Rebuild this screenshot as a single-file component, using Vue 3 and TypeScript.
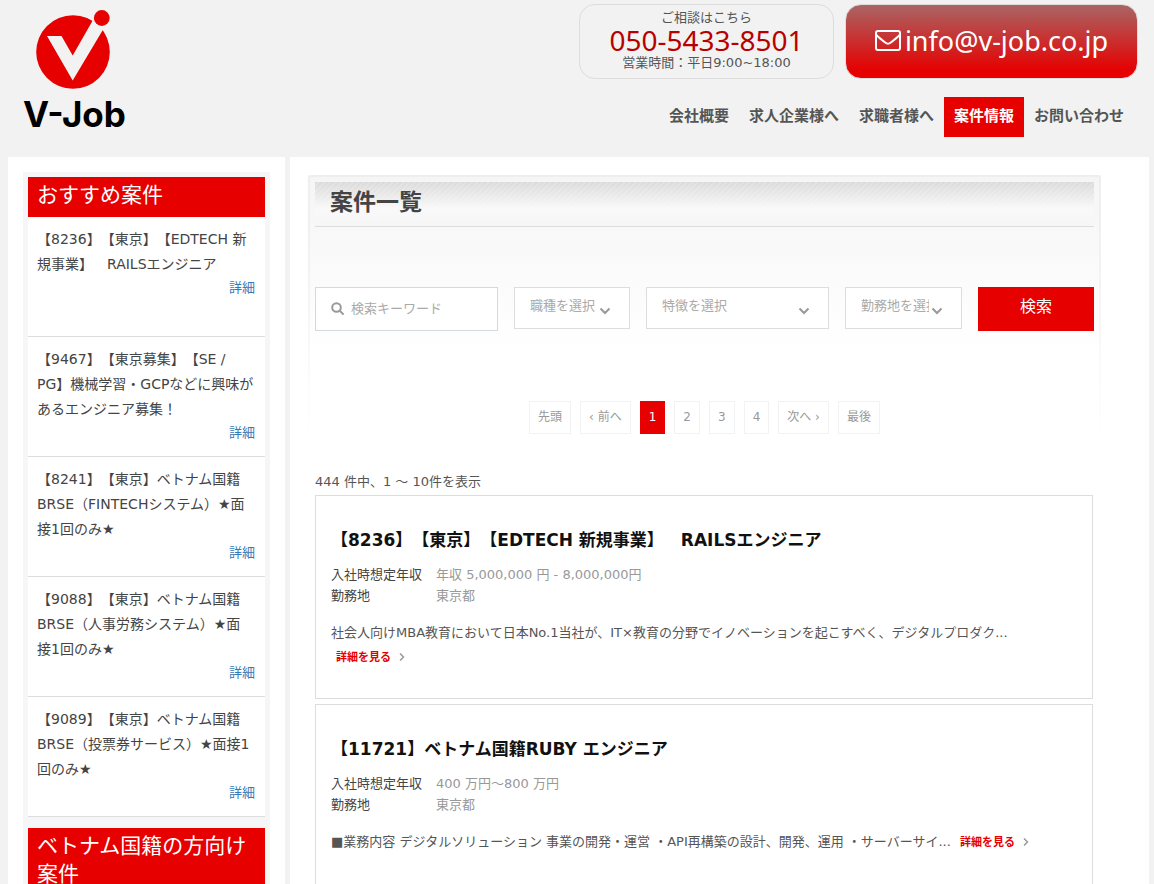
<script setup lang="ts">
import { ref } from 'vue'

interface NavItem {
  label: string
  active?: boolean
}

interface Job {
  title: string
  salary: string
  place: string
  summary: string
}

const navItems: NavItem[] = [
  { label: '会社概要' },
  { label: '求人企業様へ' },
  { label: '求職者様へ' },
  { label: '案件情報', active: true },
  { label: 'お問い合わせ' },
]

const recommended: string[] = [
  '【8236】【東京】【EDTECH 新規事業】　RAILSエンジニア',
  '【9467】【東京募集】【SE / PG】機械学習・GCPなどに興味があるエンジニア募集！',
  '【8241】【東京】ベトナム国籍BRSE（FINTECHシステム）★面接1回のみ★',
  '【9088】【東京】ベトナム国籍BRSE（人事労務システム）★面\n接1回のみ★',
  '【9089】【東京】ベトナム国籍BRSE（投票券サービス）★面接1回のみ★',
]

const filters = [
  { id: 'occupation', label: '職種を選択' },
  { id: 'feature', label: '特徴を選択' },
  { id: 'location', label: '勤務地を選択' },
]

const pages: string[] = ['先頭', '‹ 前へ', '1', '2', '3', '4', '次へ ›', '最後']
const currentPage = '1'
const keyword = ref('')

const jobs: Job[] = [
  {
    title: '【8236】【東京】【EDTECH 新規事業】　RAILSエンジニア',
    salary: '年収 5,000,000 円 - 8,000,000円',
    place: '東京都',
    summary:
      '社会人向けMBA教育において日本No.1当社が、IT×教育の分野でイノベーションを起こすべく、デジタルプロダク...',
  },
  {
    title: '【11721】ベトナム国籍RUBY エンジニア',
    salary: '400 万円～800 万円',
    place: '東京都',
    summary:
      '■業務内容 デジタルソリューション 事業の開発・運営 ・API再構築の設計、開発、運用 ・サーバーサイ...',
  },
]
</script>

<template>
  <div class="page">
    <header class="header">
      <a class="logo" href="#" aria-label="V-Job">
        <svg class="logo-mark" viewBox="0 0 76 80" aria-hidden="true">
          <circle cx="37" cy="42" r="36.800" fill="#e60000" />
          <path d="M11 26H25.500L36.700 45.500L57 10L68 18L36.700 70.500Z" fill="#f2f2f2" />
          <path d="M56 12L62 0L76 14L65.500 20.500Z" fill="#f2f2f2" />
          <circle cx="65.800" cy="8" r="7.900" fill="#e60000" />
        </svg>
        <span class="logo-text">V-Job</span>
      </a>
      <div class="header-side">
        <div class="contacts">
          <div class="phone">
            <span>ご相談はこちら</span>
            <a class="phone-number" href="tel:050-5433-8501">050-5433-8501</a>
            <span>営業時間：平日9:00~18:00</span>
          </div>
          <a class="mail" href="mailto:info@v-job.co.jp">
            <svg class="mail-icon" viewBox="0 0 26 21" aria-hidden="true">
              <rect x="1" y="1" width="24" height="19" rx="2" />
              <path d="M1 4.500C2 6 3.500 7.200 5 8.400L10.500 12.800Q13 14.600 15.500 12.800L21 8.400C22.500 7.200 24 6 25 4.500" />
            </svg>
            <span>info@v-job.co.jp</span>
          </a>
        </div>
        <nav class="nav">
          <a
            v-for="item in navItems"
            :key="item.label"
            href="#"
            :class="{ active: item.active }"
          >{{ item.label }}</a>
        </nav>
      </div>
    </header>

    <div class="columns">
      <aside class="sidebar">
        <section class="widget">
          <h2>おすすめ案件</h2>
          <ul>
            <li v-for="item in recommended" :key="item">
              <p>{{ item }}</p>
              <a href="#">詳細</a>
            </li>
          </ul>
        </section>
        <section class="widget">
          <h2>ベトナム国籍の方向け案件</h2>
        </section>
      </aside>

      <main class="main">
        <div class="panel">
          <h1>案件一覧</h1>
          <form class="search" @submit.prevent>
            <label class="keyword">
              <svg viewBox="0 0 14 14" aria-hidden="true">
                <circle cx="5.500" cy="5.500" r="4.300" />
                <path d="M8.800 8.800L12.600 12.600" />
              </svg>
              <input v-model="keyword" type="text" placeholder="検索キーワード" aria-label="検索キーワード" />
            </label>
            <div v-for="f in filters" :key="f.id" class="select">
              <select :id="f.id" :aria-label="f.label">
                <option>{{ f.label }}</option>
              </select>
              <svg viewBox="0 0 12 8" aria-hidden="true"><path d="M1.500 1.500L6 6L10.500 1.500" /></svg>
            </div>
            <button type="submit">検索</button>
          </form>
          <nav class="pager" aria-label="ページ">
            <a v-for="p in pages" :key="p" href="#" :class="{ current: p === currentPage }">{{ p }}</a>
          </nav>
        </div>

        <div class="results">
          <p class="count">444 件中、1 ～ 10件を表示</p>
          <article v-for="job in jobs" :key="job.title" class="job">
            <h3>{{ job.title }}</h3>
            <dl>
              <dt>入社時想定年収</dt>
              <dd>{{ job.salary }}</dd>
              <dt>勤務地</dt>
              <dd>{{ job.place }}</dd>
            </dl>
            <p class="summary">
              {{ job.summary }}
              <a href="#">詳細を見る<svg viewBox="0 0 6 8" aria-hidden="true"><path d="M1 0.500L4.500 4L1 7.500" /></svg></a>
            </p>
          </article>
        </div>
      </main>
    </div>
  </div>
</template>

<style>
body {
  margin: 0;
  background: #f2f2f2;
}
</style>

<style scoped>
.page {
  font: 13px/21px "DejaVu Sans", "Noto Sans CJK JP", sans-serif;
  text-spacing-trim: space-all;
  color: #444;
}

.page * {
  box-sizing: border-box;
}

a {
  text-decoration: none;
}

h1,
h2,
h3,
p,
ul,
dl,
dd {
  margin: 0;
  padding: 0;
}

.header {
  display: flex;
  justify-content: space-between;
  height: 157px;
  padding: 4px 16px 0 23px;
}

.logo {
  display: flex;
  flex-direction: column;
  padding-top: 6px;
  color: #000;
}

.logo-mark {
  width: 76px;
  height: 80px;
  margin-left: 13px;
}

.logo-text {
  font: 700 35px/48px Inter, sans-serif;
}

.header-side {
  display: flex;
  flex-direction: column;
  align-items: flex-end;
}

.contacts {
  display: flex;
  gap: 11px;
}

.phone {
  display: flex;
  flex-direction: column;
  align-items: center;
  width: 255px;
  height: 75px;
  padding-top: 2px;
  border: 1px solid #ddd;
  border-radius: 16px;
  color: #555;
}

.phone-number {
  color: #b80000;
  font: 28px/24px "Noto Sans", sans-serif;
}

.mail {
  display: flex;
  align-items: center;
  justify-content: center;
  gap: 4px;
  width: 293px;
  height: 75px;
  padding-bottom: 2px;
  border: 1px solid #ddd;
  border-radius: 16px;
  background: linear-gradient(#a96565, #e60000 90%);
  color: #fff;
  font: 27px/36px "Noto Sans", sans-serif;
}

.mail-icon {
  width: 26px;
  height: 21px;
  fill: none;
  stroke: #fff;
  stroke-width: 2;
}

.nav {
  display: flex;
  margin: 18px 4px 0 0;
}

.nav a {
  padding: 0 10px;
  color: #555;
  font-size: 15px;
  font-weight: bold;
  line-height: 38px;
  height: 40px;
}

.nav a.active {
  background: #e60000;
  color: #fff;
}

.columns {
  display: grid;
  grid-template-columns: 277px minmax(0, 1fr);
  gap: 5px;
  padding: 0 5px 0 8px;
}

.sidebar {
  padding: 15px;
  background: #fff;
}

.widget {
  padding: 5px;
  background: #f4f6f8;
}

.widget h2 {
  padding: 4px 9px 8px;
  background: #e60000;
  color: #fff;
  font-size: 21px;
  font-weight: normal;
  line-height: 28px;
}

.widget ul {
  padding-bottom: 1px;
  list-style: none;
}

.widget li {
  display: flex;
  flex-direction: column;
  min-height: 120px;
  padding: 10px 10px 0 9px;
  border-bottom: 1px solid #ddd;
  background: #fff;
  font-size: 14px;
  line-height: 25px;
}

.widget p {
  white-space: pre-line;
}

.widget li a {
  align-self: flex-end;
  color: #337ab7;
  font-size: 13px;
  line-height: 21px;
}

.main {
  padding: 18px 48px 30px 18px;
  background: #fff;
}

.panel {
  position: relative;
  padding: 7px;
  height: 265px;
  background: linear-gradient(#f5f5f5, #fff 66%);
}

/* Soft frame that fades out towards the bottom of the panel */
.panel::before {
  content: "";
  position: absolute;
  inset: 0;
  border: 2px solid #eee;
  border-bottom: 0;
  border-radius: 3px 3px 0 0;
  mask-image: linear-gradient(#000, transparent);
  pointer-events: none;
}

.panel h1 {
  height: 45px;
  padding-left: 15px;
  border-bottom: 1px solid #ddd;
  background:
    linear-gradient(rgba(247, 247, 247, 0), #f9f9f9 60%, #f6f6f6),
    repeating-linear-gradient(135deg, #dadada 0 2px, #e0e0e0 2px 4px);
  color: #444;
  font-size: 23px;
  line-height: 41px;
}

.search {
  display: grid;
  grid-template-columns: 183fr 116fr 183fr 117fr 116fr;
  gap: 16px;
  align-items: start;
  margin-top: 60px;
}

.keyword {
  display: flex;
  align-items: center;
  height: 44px;
  padding: 0 15px;
  border: 1px solid #d2dadd;
  background: #fff;
}

.keyword svg {
  flex: none;
  width: 14px;
  height: 14px;
  fill: none;
  stroke: #999;
  stroke-width: 2;
}

.keyword input {
  width: 100%;
  min-width: 0;
  padding: 0 0 1px 6px;
  border: 0;
  outline: 0;
  background: none;
  color: #444;
  font: inherit;
}

.keyword input::placeholder {
  color: #aaa;
}

.select {
  position: relative;
  min-width: 0;
}

.select select {
  display: block;
  width: 100%;
  height: 42px;
  padding: 0 32px 5px 15px;
  appearance: none;
  border: 1px solid #ddd;
  border-radius: 0;
  background: #fff;
  color: #aaa;
  font: inherit;
}

.select svg {
  position: absolute;
  top: 20px;
  right: 19px;
  width: 12px;
  height: 8px;
  fill: none;
  stroke: #999;
  stroke-width: 2;
  pointer-events: none;
}

.search button {
  height: 44px;
  padding: 0 0 4px;
  border: 0;
  background: #e60000;
  color: #fff;
  font: 16px/24px "DejaVu Sans", "Noto Sans CJK JP", sans-serif;
}

.pager {
  display: flex;
  justify-content: center;
  gap: 9px;
  margin-top: 70px;
}

.pager a {
  height: 33px;
  padding: 0 8px;
  border: 1px solid #f2f2f2;
  background: #fff;
  color: #999;
  font-size: 12px;
  line-height: 30px;
}

.pager a.current {
  border-color: #e60000;
  background: #e60000;
  color: #fff;
}

.results {
  display: flex;
  flex-direction: column;
  gap: 5px;
  padding: 31px 8px 0 7px;
}

.count {
  margin-bottom: -2px;
  color: #555;
}

.job {
  min-height: 204px;
  padding: 32px 15px 0;
  border: 1px solid #ddd;
}

.job h3 {
  margin-bottom: 11px;
  color: #111;
  font-size: 17px;
  line-height: 25px;
}

.job dl {
  display: grid;
  grid-template-columns: 105px minmax(0, 1fr);
}

.job dd {
  color: #999;
}

.summary {
  margin-top: 15px;
  color: #555;
  line-height: 24px;
}

.summary a {
  display: inline-block;
  margin-left: 5px;
  color: #e60000;
  font-size: 11px;
  font-weight: bold;
  white-space: nowrap;
}

.summary svg {
  width: 6px;
  height: 8px;
  margin-left: 8px;
  fill: none;
  stroke: #999;
  stroke-width: 1.5;
}
</style>
